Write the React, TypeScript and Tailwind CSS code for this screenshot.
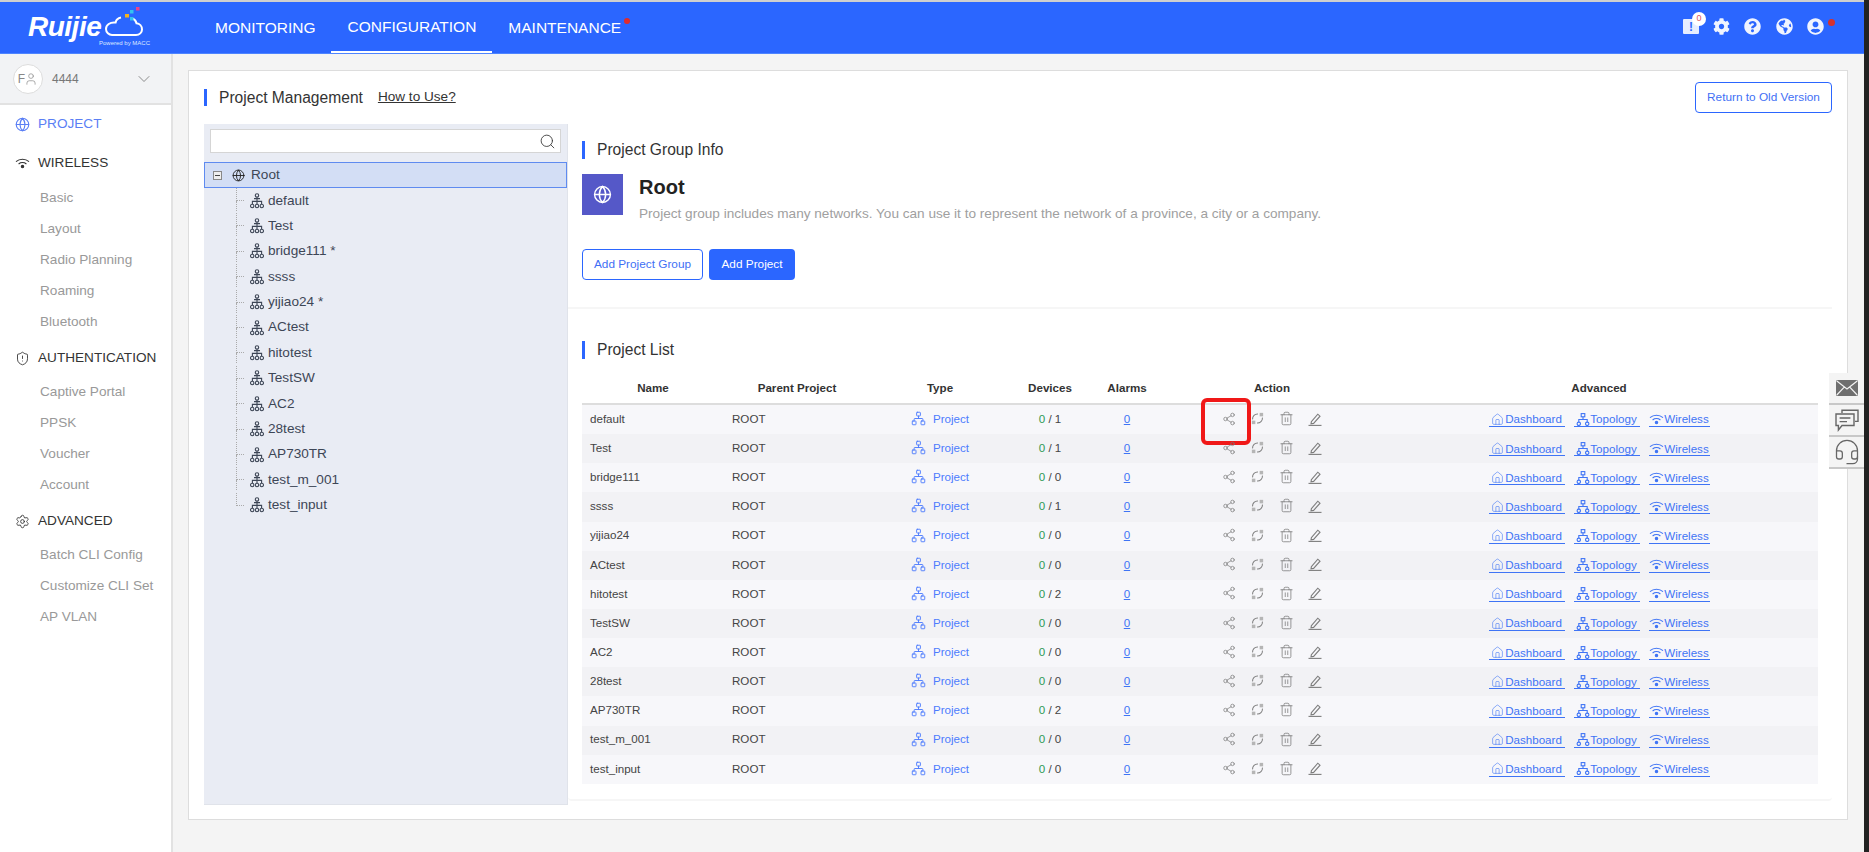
import { Globe, ShieldAlert, Settings, ChevronDown, Search, Network, Share2, Trash2, House, Headset, User } from "lucide-react";
import { FaCog, FaQuestionCircle, FaGlobeAmericas, FaUserCircle } from "react-icons/fa";

const font = "font-['Liberation_Sans',Arial,sans-serif]";

const projects = [
  { name: "default", devices: "1" },
  { name: "Test", devices: "1" },
  { name: "bridge111", devices: "0", star: true },
  { name: "ssss", devices: "1" },
  { name: "yijiao24", devices: "0", star: true },
  { name: "ACtest", devices: "0" },
  { name: "hitotest", devices: "2" },
  { name: "TestSW", devices: "0" },
  { name: "AC2", devices: "0" },
  { name: "28test", devices: "0" },
  { name: "AP730TR", devices: "2" },
  { name: "test_m_001", devices: "0" },
  { name: "test_input", devices: "0" },
];

const menu = [
  { label: "WIRELESS", icon: WifiLink, subs: ["Basic", "Layout", "Radio Planning", "Roaming", "Bluetooth"] },
  { label: "AUTHENTICATION", icon: ShieldAlert, subs: ["Captive Portal", "PPSK", "Voucher", "Account"] },
  { label: "ADVANCED", icon: Settings, subs: ["Batch CLI Config", "Customize CLI Set", "AP VLAN"] },
];

const cols = "grid grid-cols-[142px_146px_140px_80px_74px_216px_438px]";

function TreeIcon() {
  return (
    <svg width="14" height="16" viewBox="0 0 14 16" fill="none" stroke="#3d4656" strokeWidth="1.1" className="shrink-0">
      <circle cx="7" cy="2.4" r="1.7" />
      <path d="M7 4.2V9M2.4 11V8.4H11.6V11M7 8.4V11M4 5.6H10" />
      <circle cx="2.2" cy="13" r="1.7" />
      <circle cx="7" cy="13" r="1.7" />
      <circle cx="11.8" cy="13" r="1.7" />
    </svg>
  );
}

function SmallTopology() {
  return (
    <svg width="14" height="13" viewBox="0 0 14 13" fill="none" stroke="currentColor" strokeWidth="1.1" className="shrink-0">
      <rect x="5.2" y="0.6" width="3.6" height="3.2" />
      <path d="M7 3.8V6.5M2.8 9V6.5H11.2V9" />
      <circle cx="2.8" cy="10.8" r="1.7" />
      <circle cx="11.2" cy="10.8" r="1.7" />
    </svg>
  );
}

function WifiLink({ size = 15 }: { size?: number; strokeWidth?: number; className?: string }) {
  return (
    <svg width={size} height={(size * 11) / 15} viewBox="0 0 15 11" fill="none" stroke="currentColor" strokeWidth="1.1" className="shrink-0">
      <path d="M1 3.6C4.6 0.4 10.4 0.4 14 3.6M3.6 6C5.8 4.2 9.2 4.2 11.4 6" />
      <circle cx="7.5" cy="8.6" r="1.2" fill="currentColor" />
    </svg>
  );
}

function CycleIcon() {
  return (
    <svg width="13" height="13" viewBox="0 0 15 15" fill="none" stroke="#7d7d7d" strokeWidth="1.2">
      <path d="M1.8 8.5C1.6 4.6 4.4 2 8 2.2M13.2 6.5C13.4 10.4 10.6 13 7 12.8" />
      <rect x="10" y="1" width="4" height="4" fill="#b5b5b5" stroke="none" />
      <rect x="1" y="10" width="4" height="4" fill="#b5b5b5" stroke="none" />
    </svg>
  );
}

function EditIcon() {
  return (
    <svg width="14" height="14" viewBox="0 0 14 14" fill="none" stroke="#7d7d7d" strokeWidth="1.1">
      <path d="M3.4 9.6L9.8 2.2L12 4.2L5.6 11.4L3 11.9Z" />
      <path d="M0.5 13.4H13.5" />
    </svg>
  );
}

function MailIcon() {
  return (
    <svg width="22" height="16" viewBox="0 0 22 16">
      <rect width="22" height="16" rx="1.5" fill="#6f6f6f" />
      <path d="M0.8 1L11 9L21.2 1M0.8 15L8 7.4M21.2 15L14 7.4" fill="none" stroke="#f4f4f4" strokeWidth="1.2" />
    </svg>
  );
}

function ChatIcon() {
  return (
    <svg width="24" height="23" viewBox="0 0 24 23" fill="none" stroke="#666" strokeWidth="1.4">
      <path d="M7 4V1.2H23V12.4H20" />
      <path d="M1 5H19V16.5H7L3.4 21V16.5H1Z" fill="#f4f4f4" />
      <path d="M4.6 9H15.4M4.6 12.6H12" />
    </svg>
  );
}

function Heading({ children }: { children: React.ReactNode }) {
  return (
    <div className="flex h-[18px] items-center">
      <span className="h-[18px] w-[3px] bg-[#2b66ff]" />
      <span className="ml-[12px] text-[15.6px] text-[#333]">{children}</span>
    </div>
  );
}

function Header() {
  return (
    <header className="flex h-[52px] shrink-0 items-stretch border-b border-[#4d84ff] bg-[#2b66ff] text-white">
      <div className="w-[199px] shrink-0 pl-[28px] pt-[8px]">
        <div className="flex h-[26px] w-[122px] items-end">
          <span className="translate-y-[4px] text-[28px] leading-[26px] font-bold italic tracking-[-0.5px]">Ruijie</span>
          <svg width="38" height="25" viewBox="0 0 38 25" fill="none" className="ml-[4px] shrink-0 overflow-visible">
            <path d="M16 6.5C13 7 11 9.5 10.6 11.5C5 10.8 1 14 1 18C1 21.5 4 24 7 24H31C34.5 24 37 21.5 37 18.5C37 15 34.5 12.4 31.5 12.2C31 10 29 8 27 7.4" stroke="white" strokeWidth="2" />
            <rect x="20" y="3" width="4" height="3.5" fill="#f5b21c" />
            <rect x="25" y="-1" width="3.5" height="3.5" fill="#35c4ee" />
            <rect x="25" y="6" width="3.5" height="3.5" fill="#35c4ee" />
            <rect x="31" y="-4" width="3.5" height="3.5" fill="#e8428f" />
          </svg>
        </div>
        <div className="w-[122px] pt-[3px] text-right text-[6px] leading-[8px] text-[#dfe8ff]">Powered by MACC</div>
      </div>
      <nav className="flex text-[15.5px]">
        <a className="flex items-center px-[16px]">MONITORING</a>
        <a className="flex items-center border-b-2 border-white px-[16px]">CONFIGURATION</a>
        <a className="flex items-center pl-[16px]">MAINTENANCE</a>
        <span className="mt-[16px] ml-[3px] h-[6px] w-[6px] rounded-full bg-[#e02b2b]" />
      </nav>
      <div className="ml-auto flex items-center pr-[29px] pb-[2px] text-[#f0f4ff]">
        <div className="relative flex h-[15px] w-[16px] items-center justify-center rounded-[1px] bg-[#e6edff] text-[12px] font-bold text-[#2b66ff]">
          !
          <span className="absolute -top-[7px] -right-[7px] flex h-[14px] w-[14px] items-center justify-center rounded-full bg-white text-[9px] font-normal text-[#e0555a]">0</span>
        </div>
        <FaCog size={17} className="ml-[14px]" />
        <FaQuestionCircle size={17} className="ml-[14px]" />
        <FaGlobeAmericas size={17} className="ml-[15px]" />
        <FaUserCircle size={17} className="ml-[14px]" />
        <span className="mb-[8px] ml-[4px] h-[7px] w-[7px] rounded-full bg-[#d6322e]" />
      </div>
    </header>
  );
}

function Sidebar() {
  return (
    <aside className="w-[173px] shrink-0 border-r-2 border-[#e2e2e2] bg-white">
      <div className="flex h-[51px] items-center border-b-2 border-[#e2e2e2] bg-[#f2f3f5] pr-[17px] pl-[13px]">
        <div className="flex h-[30px] w-[30px] items-center justify-center rounded-full border border-[#ddd] bg-white text-[12px] text-[#888]">
          F
          <User size={14} strokeWidth={1.2} className="-ml-[1px]" />
        </div>
        <span className="ml-[9px] text-[12px] text-[#777]">4444</span>
        <ChevronDown size={20} strokeWidth={1} className="ml-auto text-[#777]" />
      </div>
      <div className="flex h-[39px] items-center pl-[15px] text-[13.6px] text-[#5b7ff5]">
        <Globe size={15} strokeWidth={1.8} />
        <span className="ml-[8px]">PROJECT</span>
      </div>
      {menu.map((group, i) => (
        <div key={group.label}>
          <div className={`flex items-center pl-[15px] text-[13.6px] text-[#333] ${i === 0 ? "h-[39px]" : "mt-[1px] h-[38px]"}`}>
            <group.icon size={15} strokeWidth={1.4} className="shrink-0" />
            <span className="ml-[8px]">{group.label}</span>
          </div>
          {group.subs.map((s) => (
            <div key={s} className="flex h-[31px] items-center pl-[40px] text-[13.6px] text-[#999]">
              {s}
            </div>
          ))}
        </div>
      ))}
    </aside>
  );
}

function ProjectTree() {
  return (
    <div className="w-[364px] shrink-0 border-r border-b border-[#e0e3ea] bg-[#e9ecf4] text-[#3d4656]">
      <div className="px-[6px] pt-[5px]">
        <div className="flex h-[24px] items-center justify-end border border-[#d5d5d5] bg-white pr-[4px]">
          <Search size={17} strokeWidth={1.2} className="text-[#333]" />
        </div>
      </div>
      <div className="mt-[9px] flex h-[26px] items-center border-[1.5px] border-[#5f8bf0] bg-[#d3def5] pl-[8px] text-[13.6px]">
        <span className="flex h-[9px] w-[9px] items-center justify-center border border-[#888] bg-[#eee]">
          <span className="h-px w-[5px] bg-[#444]" />
        </span>
        <Globe size={13} strokeWidth={1.7} className="ml-[10px] text-[#222]" />
        <span className="ml-[6px]">Root</span>
      </div>
      <div className="pl-[32px] text-[13.6px]">
        {projects.map((p, i) => (
          <div key={p.name} className="flex h-[25.4px] items-center">
            <div className="flex h-full w-[14px] shrink-0 flex-col">
              <span className="h-[13px] w-[8px] border-b border-l border-dotted border-[#aaa]" />
              {i < projects.length - 1 && <span className="h-[10px] w-[8px] border-l border-dotted border-[#aaa]" />}
            </div>
            <TreeIcon />
            <span className="ml-[4px] whitespace-pre">{p.name}{p.star ? " *" : ""}</span>
          </div>
        ))}
      </div>
    </div>
  );
}

function ProjectTable() {
  return (
    <div className="mt-[14px] text-[11.6px] text-[#444]">
      <div className={`${cols} h-[32px] items-center border-b-2 border-[#ddd] text-center font-bold text-[#333]`}>
        <span>Name</span>
        <span>Parent Project</span>
        <span>Type</span>
        <span>Devices</span>
        <span>Alarms</span>
        <span>Action</span>
        <span>Advanced</span>
      </div>
      {projects.map((p, i) => (
        <div key={p.name} className={`${cols} h-[29.15px] items-center pb-[2px] ${i % 2 ? "bg-[#f2f2f5]" : "bg-[#f7f7fa]"}`}>
          <span className="pl-[8px]">{p.name}</span>
          <span className="pl-[8px]">ROOT</span>
          <span className="flex items-center justify-center text-[#4d7cfe]">
            <Network size={15} strokeWidth={1.5} />
            <span className="ml-[7px]">Project</span>
          </span>
          <span className="text-center">
            <span className="text-[#2f9a57]">0</span> / {p.devices}
          </span>
          <span className="text-center text-[#3f74f5] underline">0</span>
          <span className="relative flex items-center pl-[58px] text-[#777]">
            <Share2 size={14} strokeWidth={1.2} className="w-[14px]" />
            <span className="ml-[15px] w-[14px]"><CycleIcon /></span>
            <Trash2 size={15} strokeWidth={1.2} className="ml-[14px]" />
            <span className="ml-[14px]"><EditIcon /></span>
            {i === 0 && (
              <span className="absolute -top-[13px] left-[37px] h-[47px] w-[50px] rounded-[6px] border-[4px] border-[#f01818]" />
            )}
          </span>
          <span className="flex items-center justify-center gap-[9px] pt-[2px] text-[#3f74f5]">
            <a className="flex h-[15px] w-[76px] items-center justify-center border-b border-[#3f74f5]">
              <House size={13} strokeWidth={1.1} className="mr-[1px]" />
              Dashboard
            </a>
            <a className="flex h-[15px] w-[66px] items-center justify-center border-b border-[#3f74f5]">
              <SmallTopology />
              Topology
            </a>
            <a className="flex h-[15px] w-[61px] items-center justify-center border-b border-[#3f74f5]">
              <WifiLink />
              Wireless
            </a>
          </span>
        </div>
      ))}
    </div>
  );
}

function RightPane() {
  return (
    <div className="min-w-0 flex-1">
      <section className="border-b-2 border-[#f6f6f6] px-[14px] pt-[17px] pb-[27px]">
        <Heading>Project Group Info</Heading>
        <div className="mt-[15px] flex h-[41px]">
          <div className="flex h-[41px] w-[41px] items-center justify-center bg-[#5558c8] text-white">
            <Globe size={19} strokeWidth={1.8} />
          </div>
          <div className="ml-[16px]">
            <div className="pt-[1px] text-[20px] leading-[24px] font-bold text-[#222]">Root</div>
            <div className="mt-[7px] text-[13.6px] leading-[16px] text-[#a0a0a0]">
              Project group includes many networks. You can use it to represent the network of a province, a city or a company.
            </div>
          </div>
        </div>
        <div className="mt-[34px] flex gap-[6px] text-[11.8px]">
          <button className="h-[31px] w-[121px] rounded-[4px] border border-[#2b66ff] text-[#3f6ff5]">Add Project Group</button>
          <button className="h-[31px] w-[86px] rounded-[4px] bg-[#2b66ff] text-white">Add Project</button>
        </div>
      </section>
      <section className="rounded-b-[4px] border-b-2 border-[#f6f6f6] px-[14px] pt-[32px] pb-[15px]">
        <Heading>Project List</Heading>
        <ProjectTable />
      </section>
    </div>
  );
}

export default function App() {
  return (
    <div className={`${font} relative flex h-[852px] w-full overflow-hidden bg-[#222]`}>
      <div className="flex min-w-0 flex-1 flex-col border-t-2 border-[#cfcfcf]">
        <Header />
        <div className="flex flex-1 bg-[#f4f4f4]">
          <Sidebar />
          <main className="min-w-0 flex-1 pt-[16px] pr-[16px] pl-[15px]">
            <div className="flex h-[750px] flex-col border border-[#ddd] bg-white px-[15px]">
              <div className="mt-[11px] flex h-[31px] shrink-0 items-center">
                <span className="h-[17px] w-[3px] bg-[#2b66ff]" />
                <span className="ml-[12px] text-[15.6px] text-[#333]">Project Management</span>
                <a className="ml-[15px] text-[13.6px] text-[#333] underline">How to Use?</a>
                <button className="ml-auto h-[31px] w-[137px] rounded-[4px] border border-[#2b66ff] text-[11.8px] text-[#3f6ff5]">
                  Return to Old Version
                </button>
              </div>
              <div className="mt-[11px] mb-[14px] flex flex-1">
                <ProjectTree />
                <RightPane />
              </div>
            </div>
          </main>
        </div>
      </div>
      <div className="w-[5px] shrink-0" />
      <div className="absolute top-[373px] right-[5px] flex w-[35px] flex-col bg-[#f4f4f4] text-[#666]">
        <div className="flex h-[32px] items-center justify-center border-b-2 border-[#c8c8c8]"><MailIcon /></div>
        <div className="flex h-[32px] items-center justify-center border-b-2 border-[#c8c8c8]"><ChatIcon /></div>
        <div className="flex h-[32px] items-center justify-center border-b-2 border-[#c8c8c8]"><Headset size={28} strokeWidth={1.1} /></div>
      </div>
    </div>
  );
}
